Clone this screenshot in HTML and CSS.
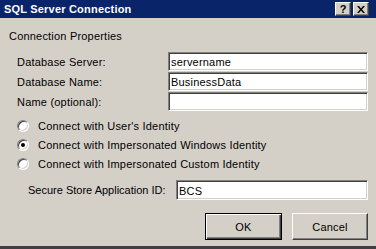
FILE: index.html
```html
<!DOCTYPE html>
<html lang="en">
<head>
    <meta charset="UTF-8">
    <title>SQL Server Connection</title>
    <link rel="stylesheet" href="styles.css">
</head>
<body>

<div class="window">
    <div class="title-bar">
        <span class="title">SQL Server Connection</span>
        <div class="title-buttons">
            <span class="caption-btn help-btn">?</span>
            <span class="caption-btn close-btn">
                <svg width="8" height="7" viewBox="0 0 8 7">
                    <path d="M0 0h2l2 2.5L6 0h2L5 3.5 8 7H6L4 4.5 2 7H0l3-3.5z" fill="#000"/>
                </svg>
            </span>
        </div>
    </div>

    <div class="content">
        <div class="group-title">Connection Properties</div>

        <div class="fields">
            <label>Database Server:</label>
            <input type="text" class="text-box" value="servername">
            <label>Database Name:</label>
            <input type="text" class="text-box" value="BusinessData">
            <label>Name (optional):</label>
            <input type="text" class="text-box" value="">
        </div>

        <div class="options">
            <div class="option"><span class="radio"></span>Connect with User's Identity</div>
            <div class="option"><span class="radio checked"></span>Connect with Impersonated Windows Identity</div>
            <div class="option"><span class="radio"></span>Connect with Impersonated Custom Identity</div>
        </div>

        <div class="store-row">
            <label>Secure Store Application ID:</label>
            <input type="text" class="text-box" value="BCS">
        </div>

        <div class="buttons">
            <button class="btn default-btn">OK</button>
            <button class="btn">Cancel</button>
        </div>
    </div>

    <div class="bottom-edge"></div>
</div>

</body>
</html>
```

FILE: styles.css
```css
body {
    margin: 0;
    padding: 0;
    background-color: #d4d0c8;
    font-family: "Liberation Sans", Arial, sans-serif;
    font-size: 11px;
    letter-spacing: 0.2px;
    color: #000;
}

.window {
    width: 376px;
    height: 249px;
    display: flex;
    flex-direction: column;
    overflow: hidden;
}

/* Title Bar */
.title-bar {
    height: 18px;
    background-color: #0a246a;
    display: flex;
    align-items: center;
    justify-content: space-between;
    padding: 0 7px 0 4px;
    flex-shrink: 0;
}

.title {
    color: #fff;
    font-weight: bold;
    font-size: 11px;
}

.title-buttons {
    display: flex;
}

.caption-btn {
    width: 14px;
    height: 12px;
    background-color: #d4d0c8;
    border: 1px solid;
    border-color: #fff #404040 #404040 #fff;
    box-shadow: inset -1px -1px 0 #808080;
    display: flex;
    align-items: center;
    justify-content: center;
    font-weight: bold;
    font-size: 11px;
    letter-spacing: 0;
    line-height: 12px;
}

.close-btn {
    margin-left: 2px;
}

/* Content */
.content {
    flex: 1;
    padding: 11px 8px 0 9px;
}

.group-title {
    line-height: 14px;
}

.fields {
    margin: 9px 0 0 8px;
    display: grid;
    grid-template-columns: 151px 200px;
    grid-auto-rows: 19px;
    row-gap: 1px;
    align-items: center;
}

.text-box {
    box-sizing: border-box;
    height: 19px;
    width: 100%;
    margin: 0;
    padding: 1px 2px 0;
    font-family: "Liberation Sans", Arial, sans-serif;
    font-size: 11px;
    letter-spacing: 0.2px;
    color: #000;
    background-color: #fff;
    border: 1px solid;
    border-color: #808080 #fff #fff #808080;
    box-shadow: inset 1px 1px 0 #404040, inset -1px -1px 0 #d4d0c8;
    outline: none;
}

/* Radio options */
.options {
    margin: 5px 0 0 8px;
}

.option {
    height: 19px;
    display: flex;
    align-items: center;
}

.radio {
    box-sizing: border-box;
    width: 12px;
    height: 12px;
    border-radius: 50%;
    background-color: #fff;
    border: 1px solid;
    border-color: #808080 #fff #fff #808080;
    box-shadow: inset 1px 1px 0 #404040, inset -1px -1px 0 #d4d0c8;
    margin-right: 9px;
    display: flex;
    align-items: center;
    justify-content: center;
}

.radio.checked::after {
    content: "";
    width: 4px;
    height: 4px;
    border-radius: 50%;
    background-color: #000;
}

/* Secure store */
.store-row {
    margin: 7px 0 0 19px;
    display: flex;
    align-items: center;
}

.store-row label {
    width: 148px;
    letter-spacing: 0;
}

.store-row .text-box {
    width: 192px;
    height: 20px;
}

/* Buttons */
.buttons {
    margin-top: 13px;
    display: flex;
    justify-content: flex-end;
    gap: 10px;
}

.btn {
    box-sizing: border-box;
    width: 76px;
    height: 27px;
    background-color: #d4d0c8;
    font-family: "Liberation Sans", Arial, sans-serif;
    font-size: 11px;
    letter-spacing: 0.2px;
    color: #000;
    border: 1px solid;
    border-color: #fff #404040 #404040 #fff;
    box-shadow: inset -1px -1px 0 #808080;
    padding: 0;
}

.default-btn {
    width: 77px;
    border: 1px solid #000;
    box-shadow: inset 1px 1px 0 #fff, inset -1px -1px 0 #404040, inset -2px -2px 0 #808080;
}

.bottom-edge {
    height: 3px;
    background-color: #404040;
    flex-shrink: 0;
}
```
